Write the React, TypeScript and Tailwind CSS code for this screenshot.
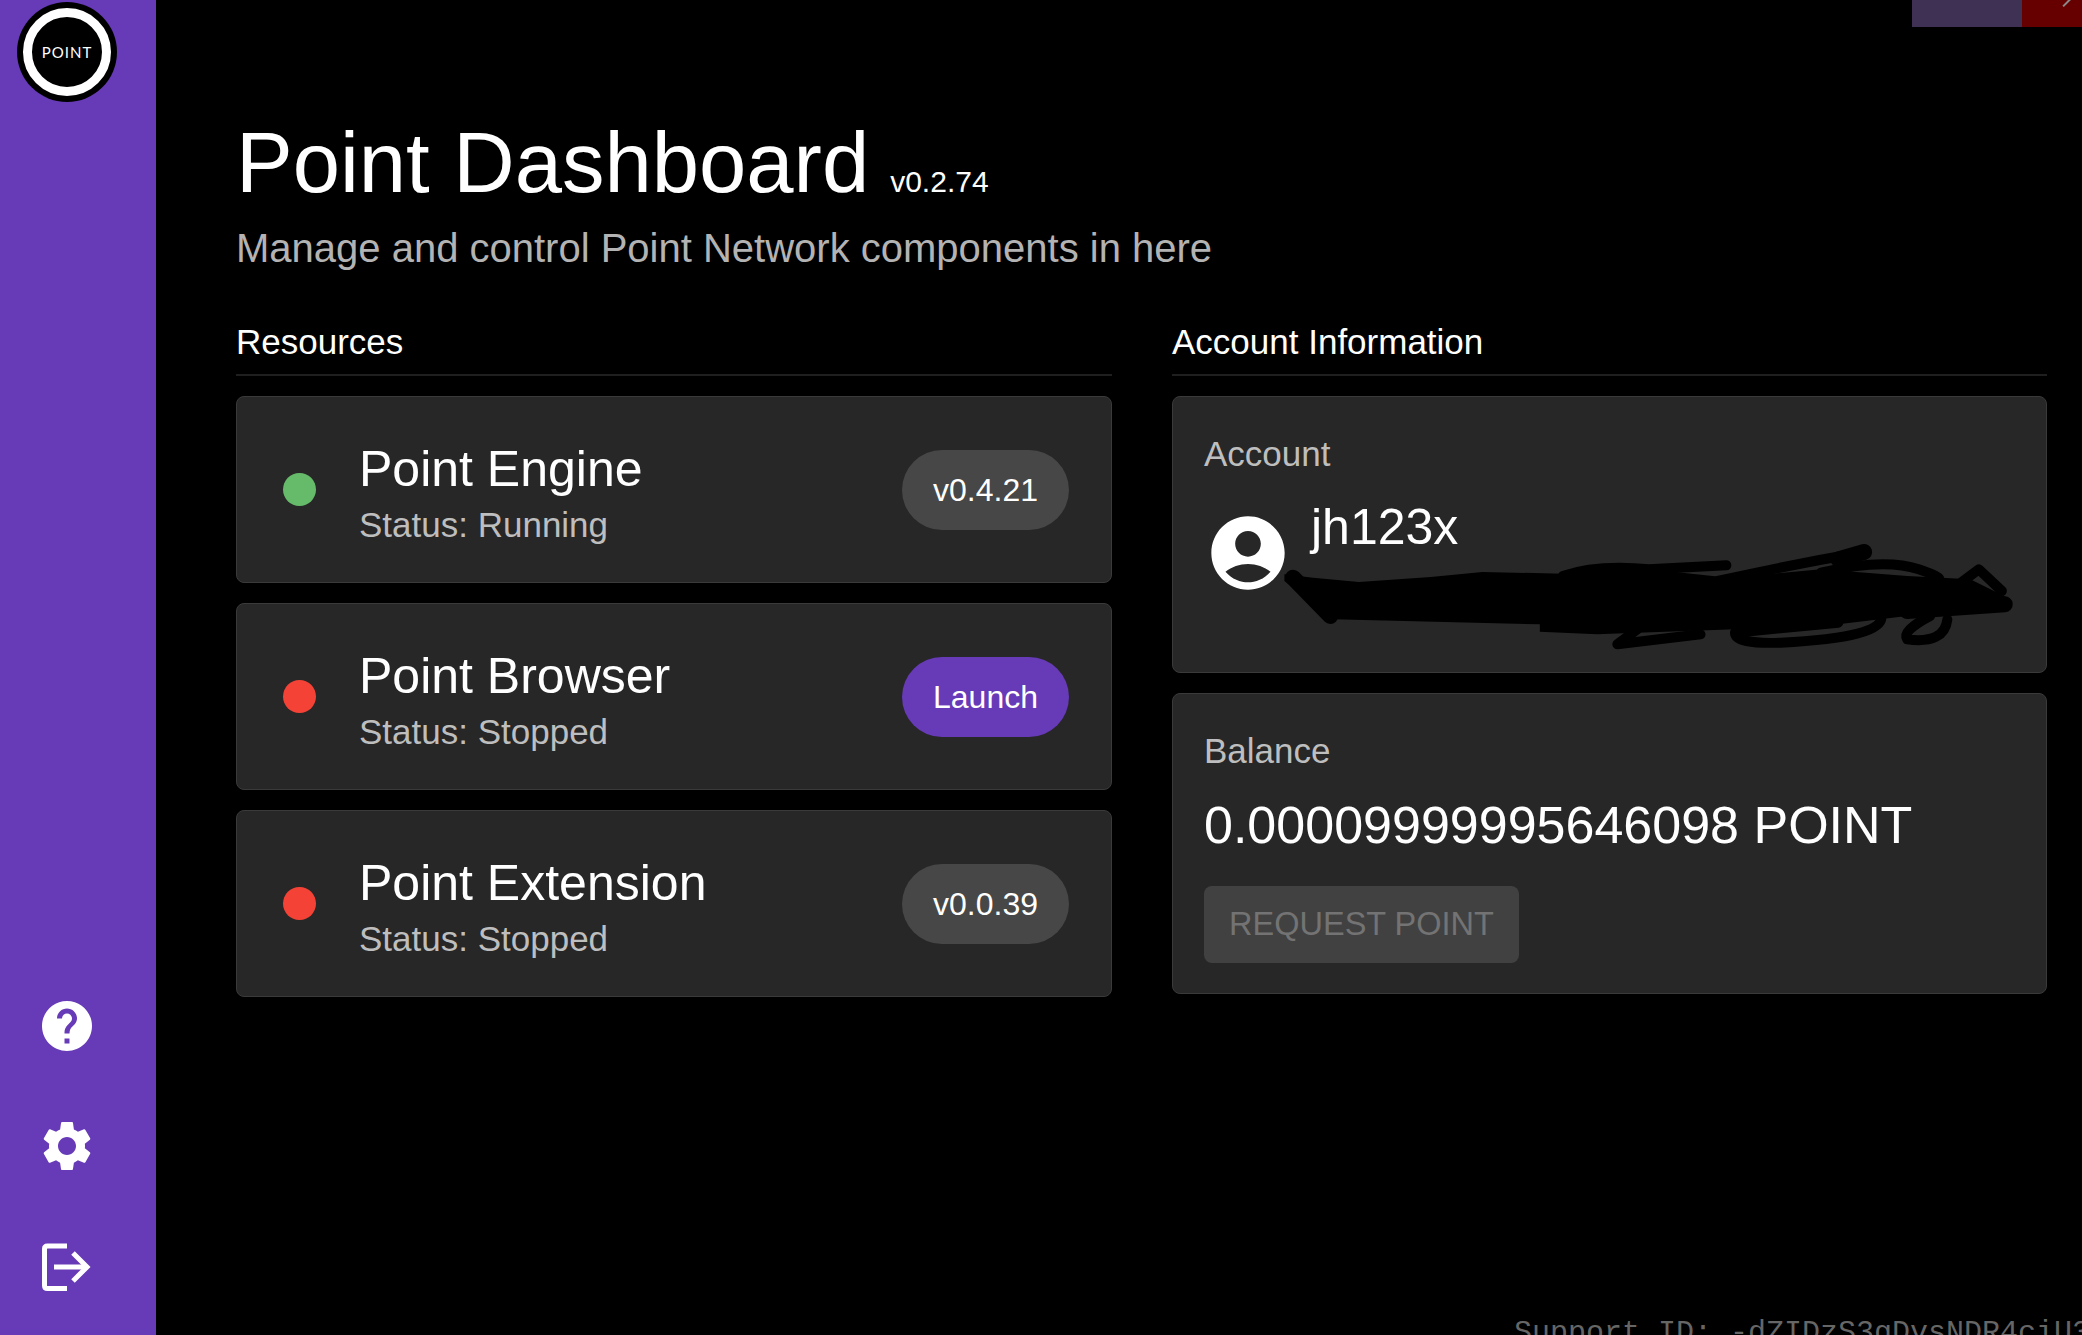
const FONT = "font-['Liberation_Sans',Arial,sans-serif]";

function HelpIcon() {
  return (
    <svg viewBox="0 0 24 24" className="w-[60px] h-[60px]" fill="#fff">
      <path d="M12 2C6.48 2 2 6.48 2 12s4.48 10 10 10 10-4.48 10-10S17.52 2 12 2zm1 17h-2v-2h2v2zm2.07-7.75-.9.92C13.45 12.9 13 13.5 13 15h-2v-.5c0-1.1.45-2.1 1.17-2.83l1.24-1.26c.37-.36.59-.86.59-1.41 0-1.1-.9-2-2-2s-2 .9-2 2H8c0-2.21 1.79-4 4-4s4 1.79 4 4c0 .88-.36 1.68-.93 2.25z" />
    </svg>
  );
}

function GearIcon() {
  return (
    <svg viewBox="0 0 24 24" className="w-[60px] h-[60px]" fill="#fff">
      <path d="M19.14 12.94c.04-.3.06-.61.06-.94 0-.32-.02-.64-.07-.94l2.03-1.58c.18-.14.23-.41.12-.61l-1.92-3.32c-.12-.22-.37-.29-.59-.22l-2.39.96c-.5-.38-1.03-.7-1.62-.94l-.36-2.54c-.04-.24-.24-.41-.48-.41h-3.84c-.24 0-.43.17-.47.41l-.36 2.54c-.59.24-1.13.57-1.62.94l-2.39-.96c-.22-.08-.47 0-.59.22L2.74 8.87c-.12.21-.08.47.12.61l2.03 1.58c-.05.3-.09.63-.09.94s.02.64.07.94l-2.03 1.58c-.18.14-.23.41-.12.61l1.92 3.32c.12.22.37.29.59.22l2.39-.96c.5.38 1.03.7 1.62.94l.36 2.54c.05.24.24.41.48.41h3.84c.24 0 .44-.17.47-.41l.36-2.54c.59-.24 1.13-.56 1.62-.94l2.39.96c.22.08.47 0 .59-.22l1.92-3.32c.12-.22.07-.47-.12-.61l-2.01-1.58zM12 15.6c-1.98 0-3.6-1.62-3.6-3.6s1.62-3.6 3.6-3.6 3.6 1.62 3.6 3.6-1.62 3.6-3.6 3.6z" />
    </svg>
  );
}

function LogoutIcon() {
  return (
    <svg viewBox="0 0 60 60" className="w-[60px] h-[60px]" fill="none" stroke="#fff" strokeWidth="5">
      <path d="M30 10H10.5Q7.5 10 7.5 13V49.5Q7.5 52.500 10.5 52.500H30" />
      <path d="M17 31H50" />
      <path d="M36 17L50 31L36 45" />
    </svg>
  );
}

function AccountIcon() {
  return (
    <svg viewBox="0 0 24 24" className="w-[88px] h-[88px] shrink-0" fill="#fff">
      <path d="M12 2C6.48 2 2 6.48 2 12s4.48 10 10 10 10-4.48 10-10S17.52 2 12 2zm0 4c1.93 0 3.5 1.57 3.5 3.5S13.93 13 12 13s-3.500-1.570-3.500-3.500S10.070 6 12 6zm0 14c-2.030 0-4.430-.820-6.140-2.880C7.550 15.800 9.680 15 12 15s4.450.800 6.140 2.120C16.430 19.180 14.030 20 12 20z" />
    </svg>
  );
}

function Scribble() {
  return (
    <svg
      viewBox="0 0 1568 900"
      preserveAspectRatio="none"
      className="absolute left-[-12px] top-[-16px] w-[900px] h-[300px] pointer-events-none"
      fill="none"
      stroke="#000"
      strokeLinecap="round"
      strokeLinejoin="round"
    >
      <path
        fill="#000"
        stroke="none"
        d="M215 580L265 590L345 603L470 588L560 573L700 578L850 565L990 590L1150 565L1300 585L1410 595L1475 650L1480 680L1300 705L1180 730L1000 745L830 755L760 760L660 752L660 730L300 715L215 600Z"
      />
      <g style={{ strokeWidth: 10 }}>
        <path vectorEffect="non-scaling-stroke" d="M700 585Q760 550 850 565L985 553" />
        <path vectorEffect="non-scaling-stroke" d="M970 600Q1100 550 1225 513" />
        <path vectorEffect="non-scaling-stroke" d="M1150 575Q1260 530 1320 565T1340 600" />
        <path vectorEffect="non-scaling-stroke" d="M1390 610L1425 565L1465 630" />
        <path vectorEffect="non-scaling-stroke" d="M830 745L795 790L940 760" />
        <path vectorEffect="non-scaling-stroke" d="M1255 705Q1260 770 1080 785Q1000 790 1000 755L1180 725" />
        <path vectorEffect="non-scaling-stroke" d="M1340 705Q1290 750 1300 775Q1365 790 1370 715" />
      </g>
      <g style={{ strokeWidth: 16 }}>
        <path vectorEffect="non-scaling-stroke" d="M230 590L295 705" />
        <path vectorEffect="non-scaling-stroke" d="M1180 535L1225 513" />
        <path vectorEffect="non-scaling-stroke" d="M1300 690L1470 670" />
      </g>
    </svg>
  );
}

function ResourceCard({
  title,
  status,
  dot,
  action,
}: {
  title: string;
  status: string;
  dot: string;
  action: React.ReactNode;
}) {
  return (
    <div className="h-[187px] rounded-lg border border-[#3a3a3a] bg-[#272727] flex items-center pl-[46px] pr-[42px]">
      <div className="w-[33px] h-[33px] rounded-full shrink-0" style={{ backgroundColor: dot }} />
      <div className="ml-[43px] flex-1 pt-[8px]">
        <div className="text-[50px] leading-[58px] text-white">{title}</div>
        <div className="text-[35px] leading-[44px] mt-[5px] text-[#bebebe]">{status}</div>
      </div>
      {action}
    </div>
  );
}

function Pill({ label, className }: { label: string; className: string }) {
  return (
    <div className={`h-[80px] w-[167px] rounded-[40px] flex items-center justify-center text-[32px] text-white ${className}`}>
      {label}
    </div>
  );
}

export default function App() {
  return (
    <div className={`relative flex h-[1335px] w-[2082px] overflow-hidden bg-black ${FONT}`}>
      <aside className="w-[156px] shrink-0 bg-[#673ab7] flex flex-col pl-[17px] pb-[8px]">
        <div className="mt-[2px] w-[100px] h-[100px] rounded-full bg-black flex items-center justify-center">
          <div className="w-[88px] h-[88px] rounded-full border-[9px] border-white flex items-center justify-center">
            <span className="font-['Lato',sans-serif] text-[15px] tracking-[1px] text-white">POINT</span>
          </div>
        </div>
        <div className="mt-auto flex flex-col gap-[60px] pl-[20px] pb-[31px]">
          <HelpIcon />
          <GearIcon />
          <LogoutIcon />
        </div>
      </aside>

      <main className="flex-1 pl-[80px] pr-[35px] pt-[114px]">
        <div className="flex items-baseline">
          <h1 className="text-[85px] leading-[98px] text-white">Point Dashboard</h1>
          <span className="ml-[21px] text-[30px] text-white">v0.2.74</span>
        </div>
        <p className="text-[40px] leading-[50px] mt-[11px] text-[#b3b3b3]">Manage and control Point Network components in here</p>

        <div className="mt-[44px] grid grid-cols-[876px_875px] gap-x-[60px]">
          <section>
            <h2 className="text-[35px] leading-[50px] text-white">Resources</h2>
            <div className="mt-[7px] h-[2px] bg-[#1f1f1f]" />
            <div className="mt-[20px] flex flex-col gap-[20px]">
              <ResourceCard title="Point Engine" status="Status: Running" dot="#66bb6a" action={<Pill label="v0.4.21" className="bg-[#474747]" />} />
              <ResourceCard title="Point Browser" status="Status: Stopped" dot="#f44336" action={<Pill label="Launch" className="bg-[#673ab7]" />} />
              <ResourceCard title="Point Extension" status="Status: Stopped" dot="#f44336" action={<Pill label="v0.0.39" className="bg-[#474747]" />} />
            </div>
          </section>

          <section>
            <h2 className="text-[35px] leading-[50px] text-white">Account Information</h2>
            <div className="mt-[7px] h-[2px] bg-[#1f1f1f]" />
            <div className="mt-[20px] flex flex-col gap-[20px]">
              <div className="relative h-[277px] rounded-lg border border-[#3a3a3a] bg-[#272727] pl-[31px] pt-[33px]">
                <div className="text-[35px] leading-[48px] text-[#bebebe]">Account</div>
                <div className="mt-[20px] flex items-start">
                  <div className="mt-[11px]">
                    <AccountIcon />
                  </div>
                  <div className="ml-[19px] text-[50px] leading-[58px] text-white">jh123x</div>
                </div>
                <Scribble />
              </div>
              <div className="h-[301px] rounded-lg border border-[#3a3a3a] bg-[#272727] pl-[31px] pt-[33px]">
                <div className="text-[35px] leading-[48px] text-[#bebebe]">Balance</div>
                <div className="mt-[20px] text-[52px] leading-[60px] text-white">0.00009999995646098 POINT</div>
                <div className="mt-[31px] w-[315px] h-[77px] rounded-lg bg-[#414141] flex items-center justify-center text-[32.5px] text-[#737373]">
                  REQUEST POINT
                </div>
              </div>
            </div>
          </section>
        </div>
      </main>

      <div className="absolute right-0 top-0 flex h-[27px]">
        <div className="w-[110px] bg-[#3e3153]" />
        <div className="relative w-[60px] bg-[#660000] overflow-hidden">
          <div className="absolute left-[44px] top-[-3px] w-[2px] h-[11px] rotate-45 bg-[#8a8a8a]" />
        </div>
      </div>

      <div className="absolute left-[1514px] top-[1316px] right-0 overflow-hidden whitespace-nowrap font-['Liberation_Mono',monospace] text-[30px] leading-[34px] text-[#666666]">
        Support ID: -dZIDzS3gDvsNDR4ciU3
      </div>
    </div>
  );
}
